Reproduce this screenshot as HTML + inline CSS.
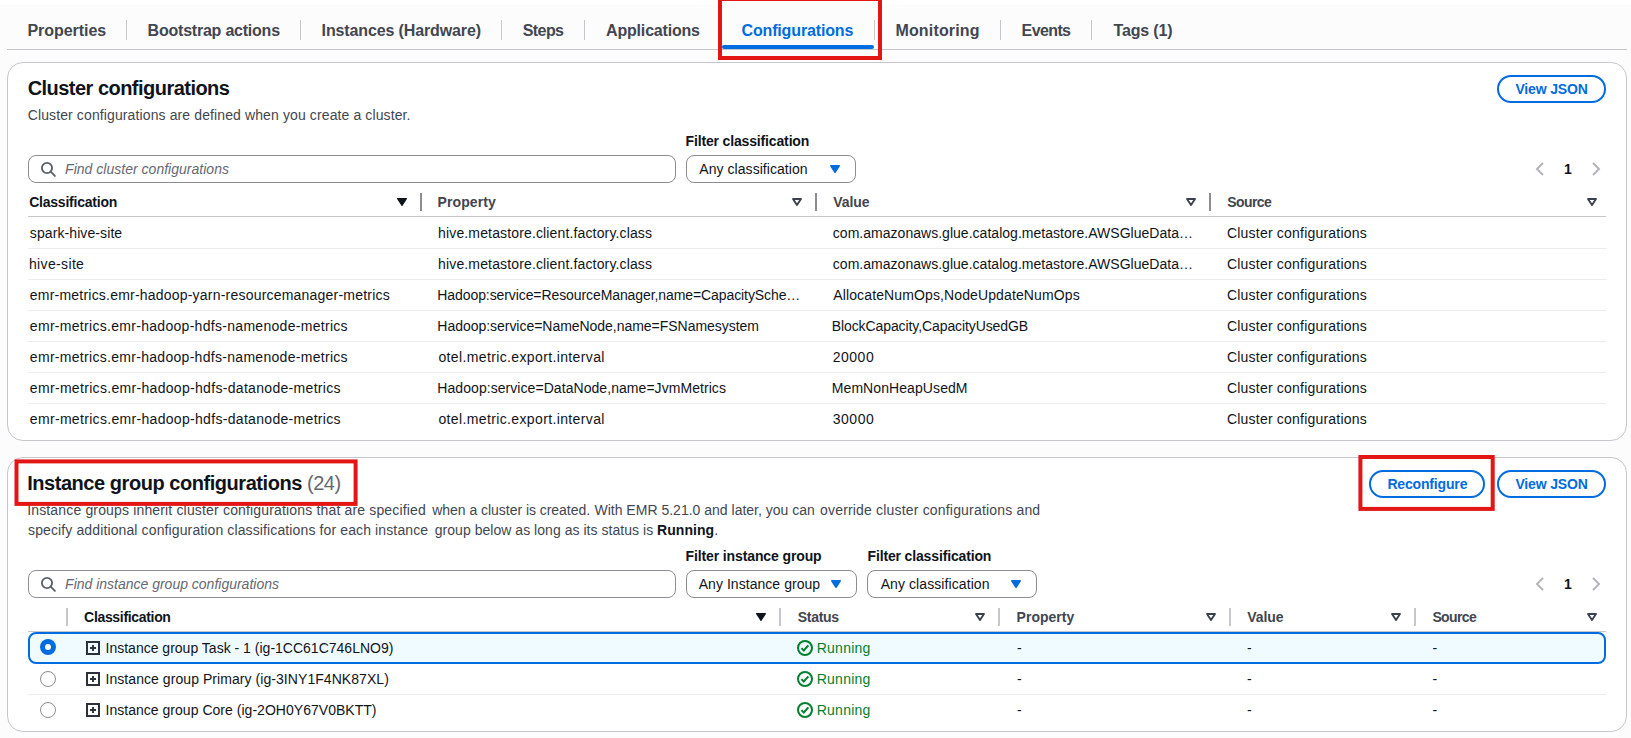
<!DOCTYPE html>
<html lang="en">
<head>
<meta charset="utf-8">
<title>Configurations</title>
<style>
*{box-sizing:border-box;margin:0;padding:0}
html,body{width:1631px;height:738px;overflow:hidden;background:#fff}
body{font-family:"Liberation Sans",sans-serif;font-size:14px;color:#0f141a;position:relative}
.page{position:absolute;left:0;top:5px;width:1631px;height:733px;background:#fcfcfc}
.abs{position:absolute}
.tx{position:absolute;white-space:nowrap;line-height:20px;font-size:14px}
.tab{font-weight:bold;font-size:16px;color:#424650}
.tab.on{color:#006ce0}
.tdiv{position:absolute;top:20px;width:1px;height:20px;background:#c6c6cd}
.tabline{position:absolute;left:7px;top:49px;width:1620px;height:1px;background:#c6c6cd}
.tabul{position:absolute;left:722px;top:45px;width:152px;height:4px;border-radius:2px;background:#006ce0}
.panel{position:absolute;left:7px;width:1620px;background:#fff;border:1px solid #c6c6cd;border-radius:16px}
.h2{font-size:20px;line-height:24px;font-weight:bold}
.h2 .cnt{font-weight:normal;color:#656871}
.desc{color:#424650}
.desc b{color:#0f141a}
.lbl{font-weight:bold}
.btn{position:absolute;height:28px;border:2px solid #006ce0;border-radius:14px;background:#fff}
.btxt{font-weight:bold;color:#006ce0}
.inp{position:absolute;height:28px;border:1px solid #8c8c94;border-radius:8px;background:#fff}
.ph{font-style:italic;color:#656871}
.pg{font-weight:bold}
.th{font-weight:bold;color:#424650}
.th.s{color:#0f141a}
.cdiv{position:absolute;width:2px;height:18px;background:#8c8c94}
.cdiv2{position:absolute;width:2px;height:17.6px;background:#c6c6cd}
.hline{position:absolute;height:1px;background:#c6c6cd}
.rline{position:absolute;height:1px;background:#ebebf0}
.sort{position:absolute}
.red{position:absolute;border:4px solid #e31616}
.run{color:#00802f}
.radio{position:absolute;width:16px;height:16px;border-radius:50%;border:1px solid #8c8c94;background:#fff}
.radio.on{border:5px solid #006ce0}
.selrow{position:absolute;left:28px;top:632px;width:1578px;height:32px;border:2px solid #006ce0;border-radius:8px;background:#f0fbff}
</style>
</head>
<body>
<div class="page"></div>
<div class="tdiv" style="left:126px"></div>
<div class="tdiv" style="left:300px"></div>
<div class="tdiv" style="left:501px"></div>
<div class="tdiv" style="left:584px"></div>
<div class="tdiv" style="left:874px"></div>
<div class="tdiv" style="left:1000px"></div>
<div class="tdiv" style="left:1091px"></div>
<div class="tabline"></div><div class="tabul"></div>
<div class="red" style="left:718px;top:-3px;width:164px;height:63px"></div>
<div class="panel" style="top:62px;height:379px"></div>
<div class="btn" style="left:1497px;top:75px;width:109px"></div>
<div class="inp" style="left:28px;top:155px;width:648px"></div>
<svg class="abs" style="left:40px;top:160.9px" width="18" height="18" viewBox="0 0 18 18" fill="none" stroke="#5c616b" stroke-width="1.9"><circle cx="7" cy="7" r="5.1"/><path d="M10.7 10.7 L14.9 14.9" stroke-linecap="round"/></svg>
<div class="inp" style="left:686px;top:155px;width:170px"></div>
<svg class="abs" style="left:829px;top:164px" width="12" height="10" viewBox="0 0 12 10"><path d="M1.8 1.8 L10.2 1.8 L6 8.2 Z" fill="#006ce0" stroke="#006ce0" stroke-width="1.6" stroke-linejoin="round"/></svg>
<svg class="abs" style="left:1534px;top:161px" width="12" height="16" viewBox="0 0 12 16" fill="none" stroke="#b4b4bb" stroke-width="2"><path d="M9 2 L3 8 L9 14"/></svg>
<svg class="abs" style="left:1590px;top:161px" width="12" height="16" viewBox="0 0 12 16" fill="none" stroke="#b4b4bb" stroke-width="2"><path d="M3 2 L9 8 L3 14"/></svg>
<div class="cdiv" style="left:420px;top:193px"></div>
<div class="cdiv" style="left:815px;top:193px"></div>
<div class="cdiv" style="left:1209px;top:193px"></div>
<svg class="sort" style="left:396px;top:197px" width="12" height="10" viewBox="0 0 12 10"><path d="M1.6 1.6 L10.4 1.6 L6 8.4 Z" fill="#0f141a" stroke="#0f141a" stroke-width="1.2" stroke-linejoin="round"/></svg>
<svg class="sort" style="left:791px;top:197px" width="12" height="10" viewBox="0 0 12 10"><path d="M2 2 L10 2 L6 8 Z" fill="none" stroke="#3a404c" stroke-width="1.85" stroke-linejoin="round"/></svg>
<svg class="sort" style="left:1184.5px;top:197px" width="12" height="10" viewBox="0 0 12 10"><path d="M2 2 L10 2 L6 8 Z" fill="none" stroke="#3a404c" stroke-width="1.85" stroke-linejoin="round"/></svg>
<svg class="sort" style="left:1586px;top:197px" width="12" height="10" viewBox="0 0 12 10"><path d="M2 2 L10 2 L6 8 Z" fill="none" stroke="#3a404c" stroke-width="1.85" stroke-linejoin="round"/></svg>
<div class="hline" style="left:28px;top:216px;width:1578px"></div>
<div class="rline" style="left:28px;top:248px;width:1578px"></div>
<div class="rline" style="left:28px;top:279px;width:1578px"></div>
<div class="rline" style="left:28px;top:310px;width:1578px"></div>
<div class="rline" style="left:28px;top:341px;width:1578px"></div>
<div class="rline" style="left:28px;top:372px;width:1578px"></div>
<div class="rline" style="left:28px;top:403px;width:1578px"></div>
<div class="panel" style="top:457px;height:275px"></div>
<div class="btn" style="left:1369px;top:470px;width:116px"></div>
<div class="btn" style="left:1497px;top:470px;width:109px"></div>
<div class="inp" style="left:28px;top:570px;width:648px"></div>
<svg class="abs" style="left:40px;top:575.9px" width="18" height="18" viewBox="0 0 18 18" fill="none" stroke="#5c616b" stroke-width="1.9"><circle cx="7" cy="7" r="5.1"/><path d="M10.7 10.7 L14.9 14.9" stroke-linecap="round"/></svg>
<div class="inp" style="left:686px;top:570px;width:171px"></div>
<svg class="abs" style="left:830px;top:579.3px" width="12" height="10" viewBox="0 0 12 10"><path d="M1.8 1.8 L10.2 1.8 L6 8.2 Z" fill="#006ce0" stroke="#006ce0" stroke-width="1.6" stroke-linejoin="round"/></svg>
<div class="inp" style="left:867px;top:570px;width:170px"></div>
<svg class="abs" style="left:1010px;top:579.3px" width="12" height="10" viewBox="0 0 12 10"><path d="M1.8 1.8 L10.2 1.8 L6 8.2 Z" fill="#006ce0" stroke="#006ce0" stroke-width="1.6" stroke-linejoin="round"/></svg>
<svg class="abs" style="left:1534px;top:576px" width="12" height="16" viewBox="0 0 12 16" fill="none" stroke="#b4b4bb" stroke-width="2"><path d="M9 2 L3 8 L9 14"/></svg>
<svg class="abs" style="left:1590px;top:576px" width="12" height="16" viewBox="0 0 12 16" fill="none" stroke="#b4b4bb" stroke-width="2"><path d="M3 2 L9 8 L3 14"/></svg>
<div class="cdiv2" style="left:66px;top:608px"></div>
<div class="cdiv2" style="left:779px;top:608px"></div>
<div class="cdiv2" style="left:998px;top:608px"></div>
<div class="cdiv2" style="left:1229px;top:608px"></div>
<div class="cdiv2" style="left:1414px;top:608px"></div>
<svg class="sort" style="left:755px;top:612px" width="12" height="10" viewBox="0 0 12 10"><path d="M1.6 1.6 L10.4 1.6 L6 8.4 Z" fill="#0f141a" stroke="#0f141a" stroke-width="1.2" stroke-linejoin="round"/></svg>
<svg class="sort" style="left:974px;top:612px" width="12" height="10" viewBox="0 0 12 10"><path d="M2 2 L10 2 L6 8 Z" fill="none" stroke="#3a404c" stroke-width="1.85" stroke-linejoin="round"/></svg>
<svg class="sort" style="left:1205px;top:612px" width="12" height="10" viewBox="0 0 12 10"><path d="M2 2 L10 2 L6 8 Z" fill="none" stroke="#3a404c" stroke-width="1.85" stroke-linejoin="round"/></svg>
<svg class="sort" style="left:1390px;top:612px" width="12" height="10" viewBox="0 0 12 10"><path d="M2 2 L10 2 L6 8 Z" fill="none" stroke="#3a404c" stroke-width="1.85" stroke-linejoin="round"/></svg>
<svg class="sort" style="left:1586px;top:612px" width="12" height="10" viewBox="0 0 12 10"><path d="M2 2 L10 2 L6 8 Z" fill="none" stroke="#3a404c" stroke-width="1.85" stroke-linejoin="round"/></svg>
<div class="hline" style="left:28px;top:631px;width:1578px"></div>
<div class="selrow"></div>
<div class="rline" style="left:28px;top:694px;width:1578px"></div>
<div class="radio on" style="left:40px;top:639px"></div>
<div class="radio" style="left:40px;top:671px"></div>
<div class="radio" style="left:40px;top:702px"></div>
<svg class="abs" style="left:86px;top:641px" width="14" height="14" viewBox="0 0 14 14" fill="none" stroke="#2c313c" stroke-width="2"><rect x="1" y="1" width="12" height="12"/><path d="M7 4 V10 M4 7 H10" stroke-width="1.9"/></svg>
<svg class="abs" style="left:797px;top:639.8px" width="16" height="16" viewBox="0 0 16 16" fill="none" stroke="#00802f" stroke-width="2"><circle cx="8" cy="8" r="7"/><path d="M4.4 8.1 L6.8 10.5 L11.3 5.3"/></svg>
<svg class="abs" style="left:86px;top:672.3px" width="14" height="14" viewBox="0 0 14 14" fill="none" stroke="#2c313c" stroke-width="2"><rect x="1" y="1" width="12" height="12"/><path d="M7 4 V10 M4 7 H10" stroke-width="1.9"/></svg>
<svg class="abs" style="left:797px;top:670.8px" width="16" height="16" viewBox="0 0 16 16" fill="none" stroke="#00802f" stroke-width="2"><circle cx="8" cy="8" r="7"/><path d="M4.4 8.1 L6.8 10.5 L11.3 5.3"/></svg>
<svg class="abs" style="left:86px;top:703.3px" width="14" height="14" viewBox="0 0 14 14" fill="none" stroke="#2c313c" stroke-width="2"><rect x="1" y="1" width="12" height="12"/><path d="M7 4 V10 M4 7 H10" stroke-width="1.9"/></svg>
<svg class="abs" style="left:797px;top:701.8px" width="16" height="16" viewBox="0 0 16 16" fill="none" stroke="#00802f" stroke-width="2"><circle cx="8" cy="8" r="7"/><path d="M4.4 8.1 L6.8 10.5 L11.3 5.3"/></svg>
<div id="tab1" class="tx tab" style="left:27.44px;top:21px;letter-spacing:-0.047px">Properties</div>
<div id="tab2" class="tx tab" style="left:147.60px;top:21px;letter-spacing:-0.221px">Bootstrap actions</div>
<div id="tab3" class="tx tab" style="left:321.58px;top:21px;letter-spacing:-0.128px">Instances (Hardware)</div>
<div id="tab4" class="tx tab" style="left:522.77px;top:21px;letter-spacing:-0.583px">Steps</div>
<div id="tab5" class="tx tab" style="left:606.10px;top:21px;letter-spacing:-0.192px">Applications</div>
<div id="tab6" class="tx tab on" style="left:741.47px;top:21px;letter-spacing:-0.144px">Configurations</div>
<div id="tab7" class="tx tab" style="left:895.44px;top:21px;letter-spacing:0.160px">Monitoring</div>
<div id="tab8" class="tx tab" style="left:1021.58px;top:21px;letter-spacing:-0.607px">Events</div>
<div id="tab9" class="tx tab" style="left:1113.51px;top:21px;letter-spacing:-0.169px">Tags (1)</div>
<div id="h1" class="tx h2" style="left:27.65px;top:76px;letter-spacing:-0.527px">Cluster configurations</div>
<div id="d1" class="tx desc" style="left:27.73px;top:105px;letter-spacing:0.115px">Cluster configurations are defined when you create a cluster.</div>
<div id="l1" class="tx lbl" style="left:685.53px;top:131px;letter-spacing:-0.151px">Filter classification</div>
<div id="ph1" class="tx ph" style="left:65.10px;top:159px;letter-spacing:0.018px">Find cluster configurations</div>
<div id="sv1" class="tx val" style="left:699.30px;top:159px;letter-spacing:0.053px">Any classification</div>
<div id="b1" class="tx btxt" style="left:1515.38px;top:79px;letter-spacing:-0.151px">View JSON</div>
<div id="pg1" class="tx pg" style="left:1564.09px;top:159px;letter-spacing:0.000px">1</div>
<div id="th11" class="tx th s" style="left:29.16px;top:192px;letter-spacing:-0.220px">Classification</div>
<div id="th12" class="tx th" style="left:437.61px;top:192px;letter-spacing:0.070px">Property</div>
<div id="th13" class="tx th" style="left:833.32px;top:192px;letter-spacing:-0.082px">Value</div>
<div id="th14" class="tx th" style="left:1227.36px;top:192px;letter-spacing:-0.624px">Source</div>
<div id="r0a" class="tx td" style="left:29.87px;top:223px;letter-spacing:0.090px">spark-hive-site</div>
<div id="r0b" class="tx td" style="left:438.08px;top:223px;letter-spacing:0.143px">hive.metastore.client.factory.class</div>
<div id="r0c" class="tx td" style="left:832.84px;top:223px;letter-spacing:0.025px">com.amazonaws.glue.catalog.metastore.AWSGlueData…</div>
<div id="r0d" class="tx td" style="left:1226.93px;top:223px;letter-spacing:0.213px">Cluster configurations</div>
<div id="r1a" class="tx td" style="left:28.93px;top:254px;letter-spacing:0.357px">hive-site</div>
<div id="r1b" class="tx td" style="left:438.08px;top:254px;letter-spacing:0.143px">hive.metastore.client.factory.class</div>
<div id="r1c" class="tx td" style="left:832.84px;top:254px;letter-spacing:0.025px">com.amazonaws.glue.catalog.metastore.AWSGlueData…</div>
<div id="r1d" class="tx td" style="left:1226.93px;top:254px;letter-spacing:0.213px">Cluster configurations</div>
<div id="r2a" class="tx td" style="left:29.87px;top:285px;letter-spacing:0.210px">emr-metrics.emr-hadoop-yarn-resourcemanager-metrics</div>
<div id="r2b" class="tx td" style="left:437.34px;top:285px;letter-spacing:-0.089px">Hadoop:service=ResourceManager,name=CapacitySche…</div>
<div id="r2c" class="tx td" style="left:833.30px;top:285px;letter-spacing:0.119px">AllocateNumOps,NodeUpdateNumOps</div>
<div id="r2d" class="tx td" style="left:1226.93px;top:285px;letter-spacing:0.213px">Cluster configurations</div>
<div id="r3a" class="tx td" style="left:29.87px;top:316px;letter-spacing:0.297px">emr-metrics.emr-hadoop-hdfs-namenode-metrics</div>
<div id="r3b" class="tx td" style="left:437.34px;top:316px;letter-spacing:-0.032px">Hadoop:service=NameNode,name=FSNamesystem</div>
<div id="r3c" class="tx td" style="left:831.78px;top:316px;letter-spacing:-0.095px">BlockCapacity,CapacityUsedGB</div>
<div id="r3d" class="tx td" style="left:1226.93px;top:316px;letter-spacing:0.213px">Cluster configurations</div>
<div id="r4a" class="tx td" style="left:29.87px;top:347px;letter-spacing:0.297px">emr-metrics.emr-hadoop-hdfs-namenode-metrics</div>
<div id="r4b" class="tx td" style="left:438.40px;top:347px;letter-spacing:0.371px">otel.metric.export.interval</div>
<div id="r4c" class="tx td" style="left:832.79px;top:347px;letter-spacing:0.494px">20000</div>
<div id="r4d" class="tx td" style="left:1226.93px;top:347px;letter-spacing:0.213px">Cluster configurations</div>
<div id="r5a" class="tx td" style="left:29.87px;top:378px;letter-spacing:0.314px">emr-metrics.emr-hadoop-hdfs-datanode-metrics</div>
<div id="r5b" class="tx td" style="left:437.34px;top:378px;letter-spacing:0.059px">Hadoop:service=DataNode,name=JvmMetrics</div>
<div id="r5c" class="tx td" style="left:831.78px;top:378px;letter-spacing:0.083px">MemNonHeapUsedM</div>
<div id="r5d" class="tx td" style="left:1226.93px;top:378px;letter-spacing:0.213px">Cluster configurations</div>
<div id="r6a" class="tx td" style="left:29.87px;top:409px;letter-spacing:0.314px">emr-metrics.emr-hadoop-hdfs-datanode-metrics</div>
<div id="r6b" class="tx td" style="left:438.40px;top:409px;letter-spacing:0.371px">otel.metric.export.interval</div>
<div id="r6c" class="tx td" style="left:832.80px;top:409px;letter-spacing:0.490px">30000</div>
<div id="r6d" class="tx td" style="left:1226.93px;top:409px;letter-spacing:0.213px">Cluster configurations</div>
<div id="h2a" class="tx h2" style="left:27.17px;top:471px;letter-spacing:-0.452px">Instance group configurations <span class="cnt">(24)</span></div>
<div id="d2a" class="tx desc" style="left:27.15px;top:500px;letter-spacing:0.158px">Instance groups inherit cluster</div>
<div id="d2b" class="tx desc" style="left:223.00px;top:500px;letter-spacing:0.160px">configurations that are specified</div>
<div id="d2c" class="tx desc" style="left:432.25px;top:500px;letter-spacing:-0.035px">when a cluster is created.</div>
<div id="d2d" class="tx desc" style="left:594.46px;top:500px;letter-spacing:0.006px">With EMR 5.21.0 and later, you can</div>
<div id="d2e" class="tx desc" style="left:820.03px;top:500px;letter-spacing:0.180px">override cluster configurations and</div>
<div id="d3a" class="tx desc" style="left:28.03px;top:520px;letter-spacing:0.121px">specify additional configuration classifications for each instance</div>
<div id="d3b" class="tx desc" style="left:434.72px;top:520px;letter-spacing:0.037px">group below as long as its status is <b>Running</b>.</div>
<div id="l2" class="tx lbl" style="left:685.46px;top:546px;letter-spacing:-0.113px">Filter instance group</div>
<div id="l3" class="tx lbl" style="left:867.52px;top:546px;letter-spacing:-0.147px">Filter classification</div>
<div id="ph2" class="tx ph" style="left:65.10px;top:574px;letter-spacing:-0.005px">Find instance group configurations</div>
<div id="sv2" class="tx val" style="left:698.69px;top:574px;letter-spacing:0.047px">Any Instance group</div>
<div id="sv3" class="tx val" style="left:880.66px;top:574px;letter-spacing:0.088px">Any classification</div>
<div id="b2" class="tx btxt" style="left:1387.40px;top:474px;letter-spacing:-0.164px">Reconfigure</div>
<div id="b3" class="tx btxt" style="left:1515.38px;top:474px;letter-spacing:-0.151px">View JSON</div>
<div id="pg2" class="tx pg" style="left:1564.09px;top:574px;letter-spacing:0.000px">1</div>
<div id="th21" class="tx th s" style="left:84.10px;top:607px;letter-spacing:-0.324px">Classification</div>
<div id="th22" class="tx th" style="left:797.87px;top:607px;letter-spacing:-0.328px">Status</div>
<div id="th23" class="tx th" style="left:1016.58px;top:607px;letter-spacing:0.022px">Property</div>
<div id="th24" class="tx th" style="left:1247.32px;top:607px;letter-spacing:-0.082px">Value</div>
<div id="th25" class="tx th" style="left:1432.40px;top:607px;letter-spacing:-0.616px">Source</div>
<div id="s0a" class="tx td" style="left:105.51px;top:638px;letter-spacing:0.006px">Instance group Task - 1 (ig-1CC61C746LNO9)</div>
<div id="s0b" class="tx td run" style="left:816.71px;top:638px;letter-spacing:0.254px">Running</div>
<div id="s0c" class="tx td" style="left:1017.10px;top:638px;letter-spacing:0.000px">-</div>
<div id="s0d" class="tx td" style="left:1247.10px;top:638px;letter-spacing:0.000px">-</div>
<div id="s0e" class="tx td" style="left:1432.40px;top:638px;letter-spacing:0.000px">-</div>
<div id="s1a" class="tx td" style="left:105.51px;top:669px;letter-spacing:0.062px">Instance group Primary (ig-3INY1F4NK87XL)</div>
<div id="s1b" class="tx td run" style="left:816.71px;top:669px;letter-spacing:0.254px">Running</div>
<div id="s1c" class="tx td" style="left:1017.10px;top:669px;letter-spacing:0.000px">-</div>
<div id="s1d" class="tx td" style="left:1247.10px;top:669px;letter-spacing:0.000px">-</div>
<div id="s1e" class="tx td" style="left:1432.40px;top:669px;letter-spacing:0.000px">-</div>
<div id="s2a" class="tx td" style="left:105.51px;top:700px;letter-spacing:0.027px">Instance group Core (ig-2OH0Y67V0BKTT)</div>
<div id="s2b" class="tx td run" style="left:816.71px;top:700px;letter-spacing:0.254px">Running</div>
<div id="s2c" class="tx td" style="left:1017.10px;top:700px;letter-spacing:0.000px">-</div>
<div id="s2d" class="tx td" style="left:1247.10px;top:700px;letter-spacing:0.000px">-</div>
<div id="s2e" class="tx td" style="left:1432.40px;top:700px;letter-spacing:0.000px">-</div>
<svg class="abs" style="left:0;top:440px" width="1631" height="80" viewBox="0 440 1631 80" fill="none" stroke="#e31616" stroke-width="4"><rect x="16.5" y="461.4" width="339.1" height="42.5"/><rect x="1360.4" y="457" width="132.3" height="51.9"/></svg>
</body>
</html>
